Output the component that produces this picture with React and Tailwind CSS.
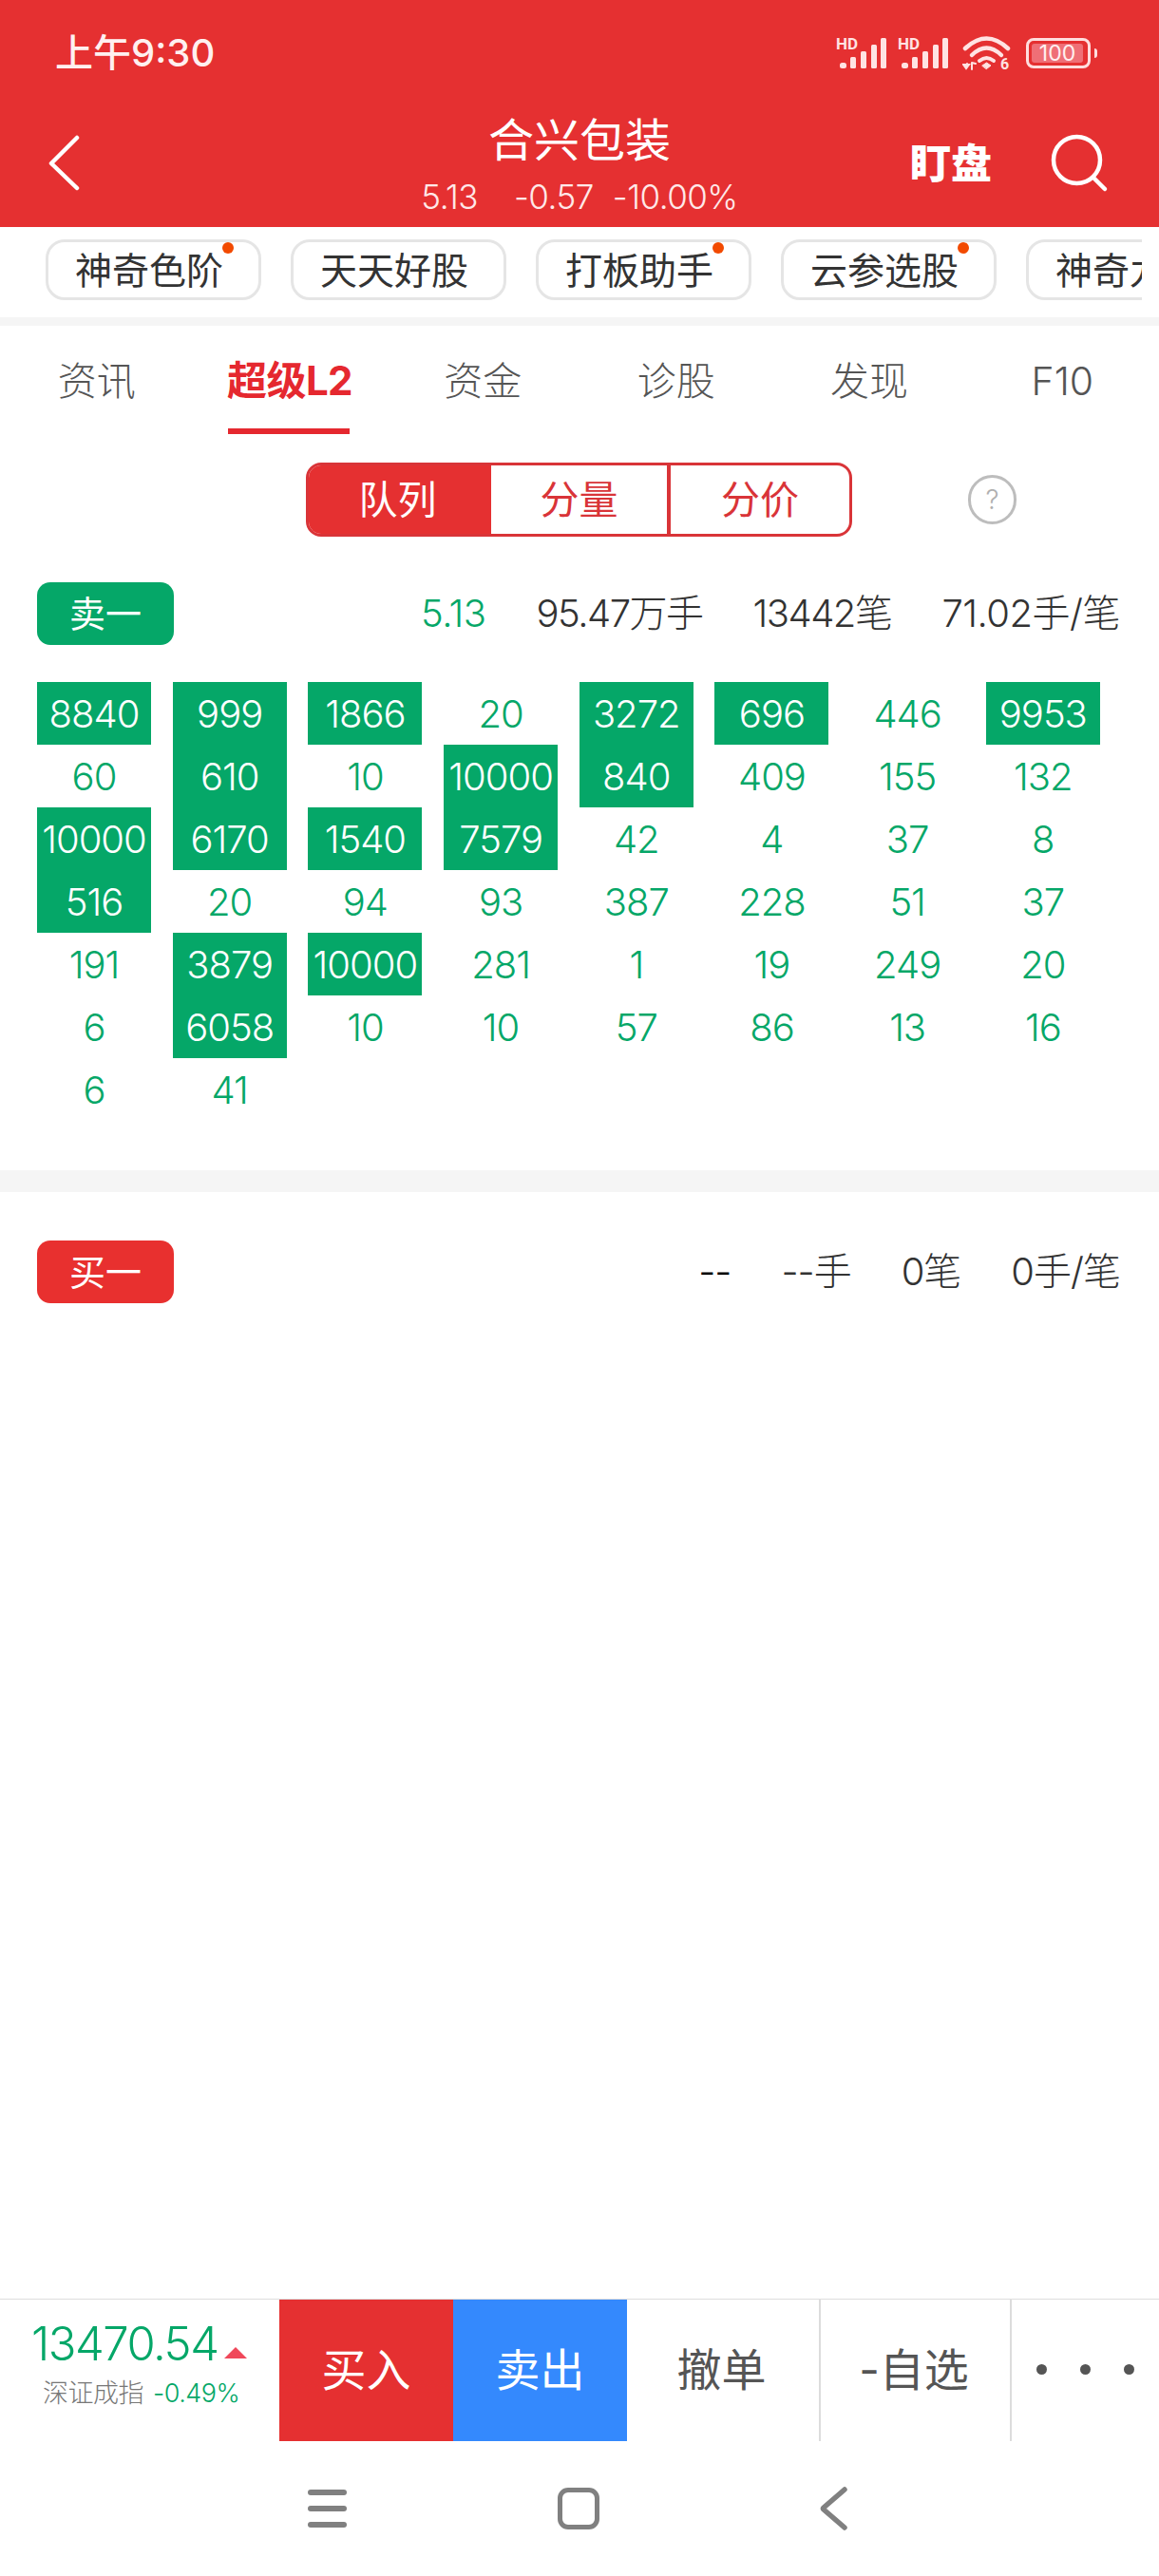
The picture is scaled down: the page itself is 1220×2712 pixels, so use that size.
import React from "react";

const chips = [
  { label: "神奇色阶", dot: true },
  { label: "天天好股", dot: false },
  { label: "打板助手", dot: true },
  { label: "云参选股", dot: true },
  { label: "神奇九转", dot: false },
];

const tabs = ["资讯", "超级L2", "资金", "诊股", "发现", "F10"];

// * marks a highlighted (large order) cell
const queue = [
  ["8840*", "999*", "1866*", "20", "3272*", "696*", "446", "9953*"],
  ["60", "610*", "10", "10000*", "840*", "409", "155", "132"],
  ["10000*", "6170*", "1540*", "7579*", "42", "4", "37", "8"],
  ["516*", "20", "94", "93", "387", "228", "51", "37"],
  ["191", "3879*", "10000*", "281", "1", "19", "249", "20"],
  ["6", "6058*", "10", "10", "57", "86", "13", "16"],
  ["6", "41"],
];

function SignalIcon() {
  return (
    <svg width="54" height="44" viewBox="0 -8 54 44" fill="#ffe3e3">
      <text x="0" y="13" fontSize="17" fontWeight="700" fontFamily="Roboto, sans-serif">HD</text>
      <rect x="4" y="27" width="7" height="6" rx="2.500" />
      <rect x="15" y="21" width="6" height="12" rx="1.500" />
      <rect x="26" y="15" width="6" height="18" rx="1.500" />
      <rect x="37" y="8" width="6" height="25" rx="1.500" />
      <rect x="47" y="1" width="6" height="32" rx="1.500" />
    </svg>
  );
}

function WifiIcon() {
  return (
    <svg width="52" height="44" viewBox="0 0 52 44" fill="none" stroke="#ffe3e3" strokeLinecap="round">
      <path d="M3 14 Q25.500 -7 48 14" strokeWidth="4.500" />
      <path d="M10 21 Q25.500 6 41 21" strokeWidth="4.500" />
      <path d="M18 27 Q25.500 21 33 27" strokeWidth="4" />
      <path d="M21 32 L25.500 29 L30 32 L25.500 35.500 Z" fill="#ffe3e3" strokeWidth="1" />
      <path d="M1 31 H7 L4 35 Z M5 30 V34 M10 36 V29 M10 29 L14 30" fill="#ffe3e3" strokeWidth="2" />
      <text x="40" y="36" fontSize="16" fontWeight="700" fill="#ffe3e3" stroke="none" fontFamily="Roboto, sans-serif">6</text>
    </svg>
  );
}

function Battery() {
  return (
    <div className="flex items-center gap-[4px]">
      <div className="w-[68px] h-[32px] rounded-[8px] border-[3px] border-[#ffdede] p-[3px]">
        <div className="w-[54px] h-full rounded-[3px] bg-[#ef6f76] flex items-center justify-center text-[23px] leading-none text-[#fff0f0]">
          100
        </div>
      </div>
      <div className="w-[3px] h-[10px] rounded-r-full bg-[#ffdede]" />
    </div>
  );
}

function StatRow({ badge, badgeColor, stats }) {
  return (
    <div className="flex items-center justify-between pl-[39px] pr-[41px] h-[66px]">
      <div
        className={`w-[144px] h-[66px] rounded-[14px] flex items-center justify-center text-white text-[38px] ${badgeColor}`}
      >
        {badge}
      </div>
      <div className="flex items-center gap-[53px] text-[40px] leading-none font-light">
        {stats.map((s) => (
          <span key={s.text} className={s.color}>
            {s.text}
          </span>
        ))}
      </div>
    </div>
  );
}

export default function App() {
  return (
    <div className="w-[1220px] h-[2712px] flex flex-col bg-white overflow-hidden font-[Inter,'Noto_Sans_CJK_SC',sans-serif]">
      {/* header */}
      <header className="h-[239px] bg-[#e53031] text-white flex flex-col shrink-0">
        <div className="h-[110px] pt-[34px] pl-[58px] pr-[65px] flex items-start justify-between">
          <span className="text-[40px] leading-[44px] font-medium text-[#fff0f0]">上午9:30</span>
          <div className="flex items-start -mt-[3px]">
            <SignalIcon />
            <div className="ml-[11px]">
              <SignalIcon />
            </div>
            <div className="ml-[14px] mt-[6px]">
              <WifiIcon />
            </div>
            <div className="ml-[15px] mt-[9px]">
              <Battery />
            </div>
          </div>
        </div>
        <div className="relative flex-1 flex flex-col items-center">
          <div className="text-[48px] leading-[50px] mt-[13px]">合兴包装</div>
          <div className="flex items-center text-[35px] leading-[40px] mt-[14px] text-[#ffe8e8] font-light tracking-[-0.5px]">
            <span>5.13</span>
            <span className="ml-[38px]">-0.57</span>
            <span className="ml-[20px]">-10.00%</span>
          </div>
          <svg className="absolute left-[50px] top-[31px]" width="36" height="60" viewBox="0 0 36 60" fill="none" stroke="white" strokeWidth="4.500" strokeLinecap="round" strokeLinejoin="round">
            <path d="M31 4 L4 31 L31 57" />
          </svg>
          <span className="absolute left-[958px] top-[36px] text-[43px] leading-[52px] font-black">盯盘</span>
          <svg className="absolute left-[1106px] top-[31px]" width="62" height="62" viewBox="0 0 62 62" fill="none" stroke="white" strokeWidth="4.500" strokeLinecap="round">
            <circle cx="27.500" cy="27.500" r="24.500" />
            <path d="M46 47 L57 58" />
          </svg>
        </div>
      </header>

      {/* chips */}
      <div className="h-[95px] shrink-0 mr-[18px] pt-[13px] pl-[48px] flex gap-[31px] overflow-hidden">
        {chips.map((c) => (
          <div
            key={c.label}
            className="relative shrink-0 w-[227px] h-[64px] pr-[9px] rounded-[20px] border-[3px] border-[#e5e5e5] flex items-center justify-center text-[39px] leading-none text-[#333]"
          >
            {c.label}
            {c.dot && <span className="absolute right-[26px] top-[0px] w-[12px] h-[12px] rounded-full bg-[#f24a00]" />}
          </div>
        ))}
      </div>
      <div className="h-[9px] shrink-0 bg-[#f5f5f5]" />

      {/* tabs */}
      <div className="h-[114px] shrink-0 grid grid-cols-6">
        {tabs.map((t, i) => (
          <div
            key={t}
            className={`relative flex items-center justify-center leading-none pt-[2px] ${
              i === 1 ? "text-[#e5282f] font-bold text-[42px] tracking-[-0.5px]" : "text-[#555] text-[41px] font-light"
            }`}
          >
            {t}
            {i === 1 && <span className="absolute bottom-0 left-[37px] w-[128px] h-[6px] bg-[#e5282f]" />}
          </div>
        ))}
      </div>

      {/* segmented control */}
      <div className="mt-[30px] pl-[322px] flex items-center shrink-0">
        <div className="w-[575px] h-[78px] flex rounded-[16px] border-[3px] border-[#d93438] overflow-hidden text-[41px] leading-none text-[#d93438]">
          <div className="w-[192px] pr-[5px] bg-[#e53031] text-white flex items-center justify-center">队列</div>
          <div className="w-[189px] border-r-[4px] border-[#d93438] flex items-center justify-center">分量</div>
          <div className="flex-1 flex items-center justify-center">分价</div>
        </div>
        <div className="ml-[122px] w-[51px] h-[52px] rounded-full border-[3px] border-[#bdbdbd] flex items-center justify-center text-[28px] leading-none font-light text-[#b0b0b0]">
          ?
        </div>
      </div>

      {/* sell queue */}
      <div className="mt-[48px] shrink-0">
        <StatRow
          badge="卖一"
          badgeColor="bg-[#05a768]"
          stats={[
            { text: "5.13", color: "text-[#05a768] tracking-[-0.5px]" },
            { text: "95.47万手", color: "text-[#333] tracking-[-1.5px]" },
            { text: "13442笔", color: "text-[#333] tracking-[-1.5px]" },
            { text: "71.02手/笔", color: "text-[#333] tracking-[-0.5px]" },
          ]}
        />
      </div>

      <div className="mt-[39px] pl-[39px] grid grid-cols-[repeat(8,120px)] gap-x-[22.7px] auto-rows-[66px] shrink-0 text-[40px] leading-none font-light tracking-[-1px]">
        {queue.flat().map((v, i) => {
          const big = v.endsWith("*");
          return (
            <div
              key={i}
              className={`flex items-center justify-center pt-[2px] ${big ? "bg-[#05a768] text-white" : "text-[#05a768]"}`}
            >
              {v.replace("*", "")}
            </div>
          );
        })}
      </div>

      <div className="mt-[52px] h-[23px] shrink-0 bg-[#f5f5f5]" />

      {/* buy queue */}
      <div className="mt-[51px] shrink-0">
        <StatRow
          badge="买一"
          badgeColor="bg-[#e8302f]"
          stats={[
            { text: "--", color: "text-black tracking-[-1px]" },
            { text: "--手", color: "text-[#333] tracking-[-1px]" },
            { text: "0笔", color: "text-[#333] tracking-[-1px]" },
            { text: "0手/笔", color: "text-[#333] tracking-[-1px]" },
          ]}
        />
      </div>

      <div className="flex-1" />

      {/* bottom toolbar */}
      <div className="h-[150px] shrink-0 border-t border-[#dedede] flex">
        <div className="w-[294px] flex flex-col pl-[33px] pt-[22px]">
          <div className="flex items-end">
            <span className="text-[49px] leading-[50px] font-light tracking-[-1.5px] text-[#05a768]">13470.54</span>
            <span className="ml-[6px] mb-[10px] w-0 h-0 border-x-[12px] border-x-transparent border-b-[12px] border-b-[#f0485a]" />
          </div>
          <div className="flex items-center mt-[10px] ml-[12px] text-[27px] leading-[34px] font-light tracking-[-0.5px]">
            <span className="text-[#777]">深证成指</span>
            <span className="ml-[10px] text-[#05a768]">-0.49%</span>
          </div>
        </div>
        <div className="w-[183px] bg-[#e53031] text-white text-[47px] flex items-center justify-center">买入</div>
        <div className="w-[183px] bg-[#3489fd] text-white text-[47px] flex items-center justify-center">卖出</div>
        <div className="w-[204px] pr-[3px] border-r-[2px] border-[#dcdcdc] text-[#555] text-[47px] flex items-center justify-center">撤单</div>
        <div className="w-[201px] pr-[3px] border-r-[2px] border-[#dcdcdc] text-[#555] text-[47px] flex items-center justify-center">-自选</div>
        <div className="flex-1 flex items-center justify-center gap-[35px] pb-[2px]">
          <span className="w-[11px] h-[11px] rounded-full bg-[#555]" />
          <span className="w-[11px] h-[11px] rounded-full bg-[#555]" />
          <span className="w-[11px] h-[11px] rounded-full bg-[#555]" />
        </div>
      </div>

      {/* android nav */}
      <div className="h-[142px] shrink-0 flex items-start pt-[51px]">
        <div className="ml-[324px] w-[41px] flex flex-col gap-[11px]">
          <span className="h-[6px] rounded-full bg-[#808080]" />
          <span className="h-[6px] rounded-full bg-[#808080]" />
          <span className="h-[6px] rounded-full bg-[#808080]" />
        </div>
        <div className="ml-[222px] w-[44px] h-[44px] rounded-[11px] border-[5px] border-[#808080] -mt-[2px]" />
        <svg className="ml-[232px] -mt-[3px]" width="30" height="46" viewBox="0 0 30 46" fill="none" stroke="#808080" strokeWidth="5.500" strokeLinecap="round" strokeLinejoin="round">
          <path d="M26 3 L4 22 Q3 23 4 24 L26 43" />
        </svg>
      </div>
    </div>
  );
}
